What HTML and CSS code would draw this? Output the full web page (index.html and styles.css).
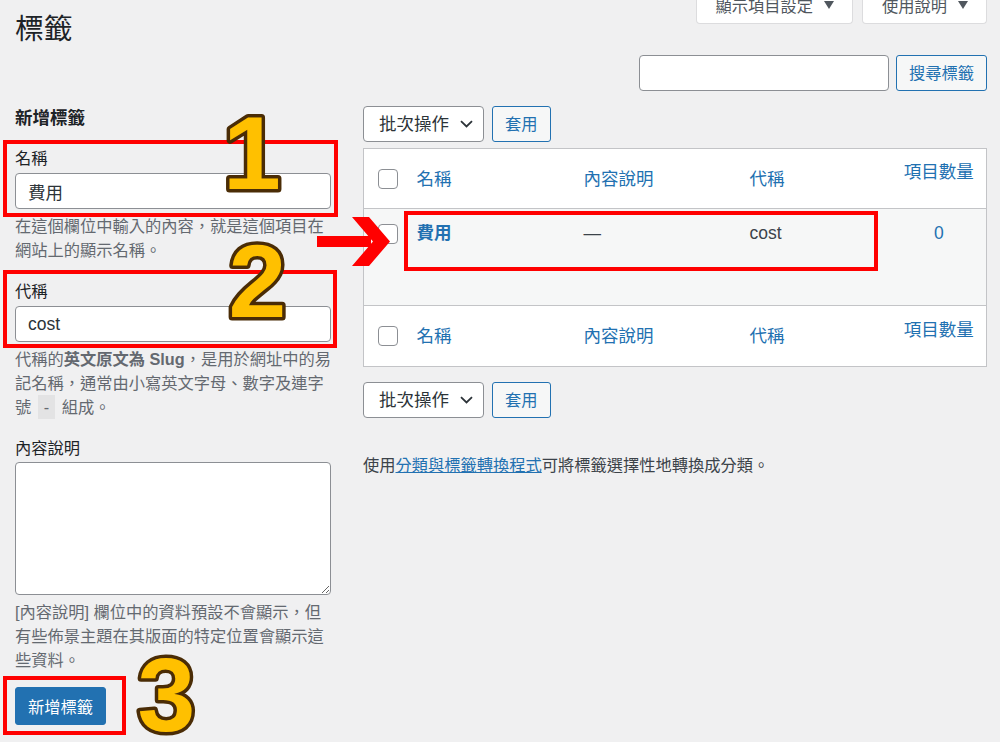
FILE: index.html
```html
<!DOCTYPE html>
<html lang="zh-Hant">
<head>
<meta charset="utf-8">
<title>標籤</title>
<link rel="stylesheet" href="styles.css">
</head>
<body>
<div class="wrap">
  <div class="top">
    <h1 class="title">標籤</h1>
    <div class="meta-links">
      <button class="meta-tab">顯示項目設定<span class="tri"></span></button>
      <button class="meta-tab">使用說明<span class="tri"></span></button>
    </div>
  </div>

  <div class="search-row">
    <input class="search-input" type="search" aria-label="搜尋標籤">
    <button class="btn">搜尋標籤</button>
  </div>

  <div class="cols">
    <div class="col-left">
      <h2 class="form-title">新增標籤</h2>

      <div class="field field-first">
        <label class="label">名稱</label>
        <input class="text-input" type="text" value="費用">
        <p class="help">在這個欄位中輸入的內容，就是這個項目在網站上的顯示名稱。</p>
      </div>

      <div class="field">
        <label class="label">代稱</label>
        <input class="text-input" type="text" value="cost">
        <p class="help">代稱的<strong>英文原文為 Slug</strong>，是用於網址中的易<br>記名稱，通常由小寫英文字母、數字及連字<br>號 <code class="code">-</code> 組成。</p>
      </div>

      <div class="field">
        <label class="label">內容說明</label>
        <textarea class="textarea"></textarea>
        <p class="help">[內容說明] 欄位中的資料預設不會顯示，但<br>有些佈景主題在其版面的特定位置會顯示這<br>些資料。</p>
      </div>

      <button class="btn-primary">新增標籤</button>
    </div>

    <div class="col-right">
      <div class="bulk">
        <div class="select">批次操作
          <svg class="chev" width="13" height="8" viewBox="0 0 13 8"><path d="M1 1.2 L6.5 6.5 L12 1.2" fill="none" stroke="#2c3338" stroke-width="1.8"/></svg>
        </div>
        <button class="btn">套用</button>
      </div>

      <table class="list">
        <colgroup>
          <col class="w-cb"><col class="w-name"><col class="w-desc"><col class="w-slug"><col>
        </colgroup>
        <thead>
          <tr>
            <th class="cb"><span class="check"></span></th>
            <th>名稱</th>
            <th>內容說明</th>
            <th>代稱</th>
            <th class="num">項目數量</th>
          </tr>
        </thead>
        <tbody>
          <tr class="alt">
            <td class="cb"><span class="check"></span></td>
            <td><a class="row-title">費用</a></td>
            <td>—</td>
            <td>cost</td>
            <td class="num"><a class="count">0</a></td>
          </tr>
        </tbody>
        <tfoot>
          <tr>
            <th class="cb"><span class="check"></span></th>
            <th>名稱</th>
            <th>內容說明</th>
            <th>代稱</th>
            <th class="num">項目數量</th>
          </tr>
        </tfoot>
      </table>

      <div class="bulk bulk-bottom">
        <div class="select">批次操作
          <svg class="chev" width="13" height="8" viewBox="0 0 13 8"><path d="M1 1.2 L6.5 6.5 L12 1.2" fill="none" stroke="#2c3338" stroke-width="1.8"/></svg>
        </div>
        <button class="btn">套用</button>
      </div>

      <p class="note">使用<a class="link">分類與標籤轉換程式</a>可將標籤選擇性地轉換成分類。</p>
    </div>
  </div>
</div>

<div class="anno-box box1"></div>
<div class="anno-box box2"></div>
<div class="anno-box box3"></div>
<div class="anno-box box4"></div>

<svg class="anno-layer" width="1000" height="742" viewBox="0 0 1000 742">
  <g class="anno-num">
    <text x="223" y="188.5">1</text>
    <text x="228.5" y="316.5">2</text>
    <text x="137.5" y="730.5">3</text>
  </g>
  <g fill="#ff0000">
    <rect x="317" y="236" width="54" height="11"/>
    <polygon points="352,217 369,217 390,241.5 369,266 352,266 373,241.5"/>
  </g>
</svg>
</body>
</html>
```

FILE: styles.css
```css
* { box-sizing: border-box; }

html, body { margin: 0; }

body {
  background: #f0f0f1;
  color: #3c434a;
  font-family: "Liberation Sans", "Noto Sans CJK TC", sans-serif;
  font-size: 16.25px;
  line-height: 1.5;
  position: relative;
  height: 742px;
  overflow: hidden;
}

.wrap { padding: 0 13px 0 15px; }

/* header */
.top {
  display: flex;
  justify-content: space-between;
  align-items: flex-start;
  height: 49px;
}
.title {
  margin: 0;
  padding-top: 9px;
  font-size: 28.75px;
  font-weight: 400;
  line-height: 40px;
  color: #1d2327;
}
.meta-links {
  display: flex;
  gap: 9px;
  margin-top: -13px;
}
.meta-tab {
  height: 37px;
  padding: 0 18px 0 19px;
  background: #fff;
  border: 1px solid #dcdcde;
  border-top: 0;
  border-radius: 0 0 4px 4px;
  font-family: inherit;
  font-size: 16.25px;
  color: #50575e;
  display: flex;
  align-items: center;
  gap: 11px;
}
.tri {
  width: 0;
  height: 0;
  border-left: 5px solid transparent;
  border-right: 5px solid transparent;
  border-top: 8px solid #50575e;
}

/* search */
.search-row {
  display: flex;
  justify-content: flex-end;
  gap: 7px;
  margin-top: 6px;
}
.search-input {
  width: 250px;
  height: 36px;
  border: 1px solid #8c8f94;
  border-radius: 4px;
  background: #fff;
}
.btn {
  height: 36px;
  padding: 0 12px;
  border: 1px solid #2271b1;
  border-radius: 3px;
  background: #f6f7f7;
  color: #2271b1;
  font-family: inherit;
  font-size: 16.25px;
  line-height: 1;
}

/* columns */
.cols {
  display: grid;
  grid-template-columns: 316px 1fr;
  gap: 32px;
  padding-top: 15px;
}

.form-title {
  margin: 0;
  font-size: 17.5px;
  font-weight: 700;
  line-height: 24px;
  color: #1d2327;
}
.field { margin-top: 17px; }
.field-first { margin-top: 16px; }
.label {
  display: block;
  font-size: 16.25px;
  font-weight: 400;
  line-height: 24px;
  color: #1d2327;
}
.text-input {
  display: block;
  width: 100%;
  height: 36px;
  margin-top: 3px;
  padding: 0 12px;
  border: 1px solid #8c8f94;
  border-radius: 4px;
  background: #fff;
  font-family: inherit;
  font-size: 17.5px;
  color: #2c3338;
}
.textarea {
  display: block;
  width: 100%;
  height: 133px;
  margin-top: 2px;
  border: 1px solid #8c8f94;
  border-radius: 4px;
  background: #fff;
  resize: vertical;
}
.help {
  margin: 5px 0 0;
  font-size: 16.25px;
  line-height: 24px;
  color: #646970;
}
.help strong { font-weight: 700; }
.code {
  font-family: inherit;
  background: #e3e3e4;
  padding: 3px 6px;
  margin: 0 2px;
}
.btn-primary {
  margin-top: 15px;
  height: 38px;
  padding: 0 12px;
  border: 1px solid #2271b1;
  border-radius: 3px;
  background: #2271b1;
  color: #fff;
  font-family: inherit;
  font-size: 16.25px;
}

/* right column */
.bulk {
  display: flex;
  gap: 8px;
}
.bulk-bottom { margin-top: 15px; }
.select {
  width: 121px;
  height: 36px;
  padding: 0 10px 0 15px;
  border: 1px solid #8c8f94;
  border-radius: 4px;
  background: #fff;
  display: flex;
  align-items: center;
  justify-content: space-between;
  font-size: 17.5px;
  color: #2c3338;
}

.list {
  width: 100%;
  margin-top: 6px;
  border-collapse: collapse;
  table-layout: fixed;
  background: #fff;
  border: 1px solid #c3c4c7;
}
.w-cb { width: 42px; }
.w-name { width: 167px; }
.w-desc { width: 166px; }
.w-slug { width: 153px; }

.list th {
  height: 60px;
  padding: 0 11px;
  text-align: left;
  font-weight: 400;
  font-size: 17.5px;
  line-height: 24px;
  color: #2271b1;
  vertical-align: middle;
}
.list thead tr { border-bottom: 1px solid #c3c4c7; }
.list tfoot tr { border-top: 1px solid #c3c4c7; }
.list tfoot th { height: 61px; }
.list th.num {
  text-align: center;
  vertical-align: top;
  padding-top: 11px;
}
.list tfoot th.num { padding-top: 12px; }
.list td {
  height: 97px;
  padding: 12px 11px 0;
  vertical-align: top;
  font-size: 17.5px;
  line-height: 24px;
  color: #3c434a;
}
.list td.num { text-align: center; }
.list .cb { padding-left: 14px; padding-right: 0; }
.alt { background: #f6f7f7; }
.check {
  display: block;
  width: 20px;
  height: 20px;
  border: 1px solid #8c8f94;
  border-radius: 4px;
  background: #fff;
}
.list td .check { margin-top: 3px; }
.row-title { color: #2271b1; font-weight: 700; }
.count { color: #2271b1; }

.note {
  margin: 35px 0 0;
  font-size: 16.25px;
  line-height: 24px;
  color: #3c434a;
}
.link { color: #2271b1; text-decoration: underline; }

/* annotations */
.anno-box {
  position: absolute;
  border: 4px solid #ff0000;
}
.box1 { left: 3px; top: 140px; width: 335px; height: 77px; }
.box2 { left: 3px; top: 270px; width: 334px; height: 78px; }
.box3 { left: 3px; top: 676px; width: 123px; height: 59px; }
.box4 { left: 404px; top: 211px; width: 474px; height: 60px; }

.anno-layer {
  position: absolute;
  left: 0;
  top: 0;
  pointer-events: none;
}
.anno-num text {
  font-family: "Liberation Sans", sans-serif;
  font-weight: 700;
  font-size: 104px;
  fill: #ffc000;
  stroke: #4a2c06;
  stroke-width: 7px;
  stroke-linejoin: round;
  paint-order: stroke fill;
}
```
